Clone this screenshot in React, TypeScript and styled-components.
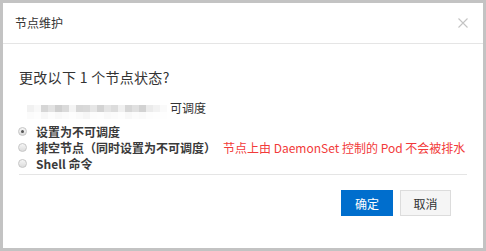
import React from "react";
import styled, { createGlobalStyle } from "styled-components";

const Global = createGlobalStyle`
  html, body { margin: 0; padding: 0; }
  body {
    font-family: "Noto Sans CJK SC", "Noto Sans", sans-serif;
    background: #c3c3c3;
  }
`;

const Frame = styled.div`
  width: 486px;
  height: 251px;
  box-sizing: border-box;
  padding: 3px;
  background: #c3c3c3;
`;

const Dialog = styled.div`
  width: 100%;
  height: 100%;
  background: #fff;
  display: flex;
  flex-direction: column;
`;

const Header = styled.div`
  height: 40px;
  border-bottom: 1px solid #e5e5e5;
  display: flex;
  align-items: center;
  justify-content: space-between;
  padding: 0 15px 0 12px;
`;

const Title = styled.div`
  font-size: 12px;
  color: #333;
  line-height: 20px;
`;

const Close = styled.button`
  border: 0;
  background: none;
  padding: 0;
  width: 10px;
  height: 10px;
  display: flex;
  cursor: pointer;
`;

const Body = styled.div`
  padding: 23px 16px 0 16px;
  display: flex;
  flex-direction: column;
`;

const Question = styled.div`
  font-size: 14px;
  line-height: 20px;
  color: #333;
  letter-spacing: 0.3px;
`;

const NodeRow = styled.div`
  margin-top: 10px;
  display: flex;
  align-items: center;
  height: 20px;
  padding-left: 8px;
  font-size: 12px;
  color: #333;
`;

const Mosaic = styled.div`
  display: grid;
  grid-template-columns: repeat(20, 7px);
  grid-auto-rows: 7px;
  margin-top: 9px;
  margin-right: 3px;
`;

const Cell = styled.span<{ $c: string }>`
  background: ${(p) => p.$c};
`;

const Options = styled.div`
  margin-top: 6px;
  display: flex;
  flex-direction: column;
`;

const Option = styled.label`
  display: flex;
  align-items: center;
  height: 16px;
  font-size: 12px;
  font-weight: 700;
  color: #3a3a3a;
`;

const Radio = styled.span<{ $checked?: boolean }>`
  width: 9px;
  height: 9px;
  box-sizing: border-box;
  border-radius: 50%;
  border: 1px solid #c6c6c6;
  background: linear-gradient(#f6f6f6, #dcdcdc);
  margin-left: -1px;
  margin-right: 9px;
  display: flex;
  align-items: center;
  justify-content: center;
  &::after {
    content: "";
    width: 3px;
    height: 3px;
    border-radius: 50%;
    background: ${(p) => (p.$checked ? "#555" : "transparent")};
  }
`;

const Hint = styled.span`
  margin-left: 7px;
  color: #f23a3a;
  font-weight: 400;
`;

const Divider = styled.div`
  margin-top: 3px;
  height: 1px;
  background: #e5e5e5;
`;

const Footer = styled.div`
  display: flex;
  justify-content: flex-end;
  gap: 7px;
  padding: 15px 32px 0 0;
`;

const Button = styled.button<{ $primary?: boolean }>`
  height: 26px;
  width: ${(p) => (p.$primary ? "52px" : "51px")};
  box-sizing: border-box;
  font-family: inherit;
  font-size: 12px;
  padding: 0;
  border: 1px solid ${(p) => (p.$primary ? "#006ecd" : "#dcdcdc")};
  background: ${(p) => (p.$primary ? "#006ecd" : "#f5f5f5")};
  color: ${(p) => (p.$primary ? "#fff" : "#333")};
  cursor: pointer;
`;

const row1 = ["#f1f1f1","#f8f8f8","#d6d6d6","#e2e2e2","#cfcfcf","#dadada","#f4f4f4","#d7d7d7","#d9d9d9","#e6e6e6","#d3d3d3","#e4e4e4","#dcdcdc","#f0f0f0","#d6d6d6","#e0e0e0","#d2d2d2","#ebebeb","#f2f2f2","#fafafa"];
const row2 = ["#fbfbfb","#fdfdfd","#f7f7f7","#fcfcfc","#f8f8f8","#fbfbfb","#fdfdfd","#fafafa","#f6f6f6","#fcfcfc","#fdfdfd","#f9f9f9","#fbfbfb","#fdfdfd","#f8f8f8","#fcfcfc","#fafafa","#fdfdfd","#fefefe","#fefefe"];

export default function App() {
  return (
    <>
      <Global />
      <Frame>
        <Dialog>
          <Header>
            <Title>节点维护</Title>
            <Close aria-label="关闭">
              <svg width="10" height="10" viewBox="0 0 10 10">
                <path d="M0.5 0.5L9.5 9.5M9.5 0.5L0.5 9.5" stroke="#c4c4c4" strokeWidth="1.1" />
              </svg>
            </Close>
          </Header>
          <Body>
            <Question>更改以下 1 个节点状态?</Question>
            <NodeRow>
              <Mosaic>
                {row1.map((c, i) => (
                  <Cell key={"a" + i} $c={c} />
                ))}
                {row2.map((c, i) => (
                  <Cell key={"b" + i} $c={c} />
                ))}
              </Mosaic>
              可调度
            </NodeRow>
            <Options>
              <Option>
                <Radio $checked />
                设置为不可调度
              </Option>
              <Option>
                <Radio />
                排空节点（同时设置为不可调度）
                <Hint>节点上由 DaemonSet 控制的 Pod 不会被排水</Hint>
              </Option>
              <Option>
                <Radio />
                Shell 命令
              </Option>
            </Options>
            <Divider />
          </Body>
          <Footer>
            <Button $primary>确定</Button>
            <Button>取消</Button>
          </Footer>
        </Dialog>
      </Frame>
    </>
  );
}
